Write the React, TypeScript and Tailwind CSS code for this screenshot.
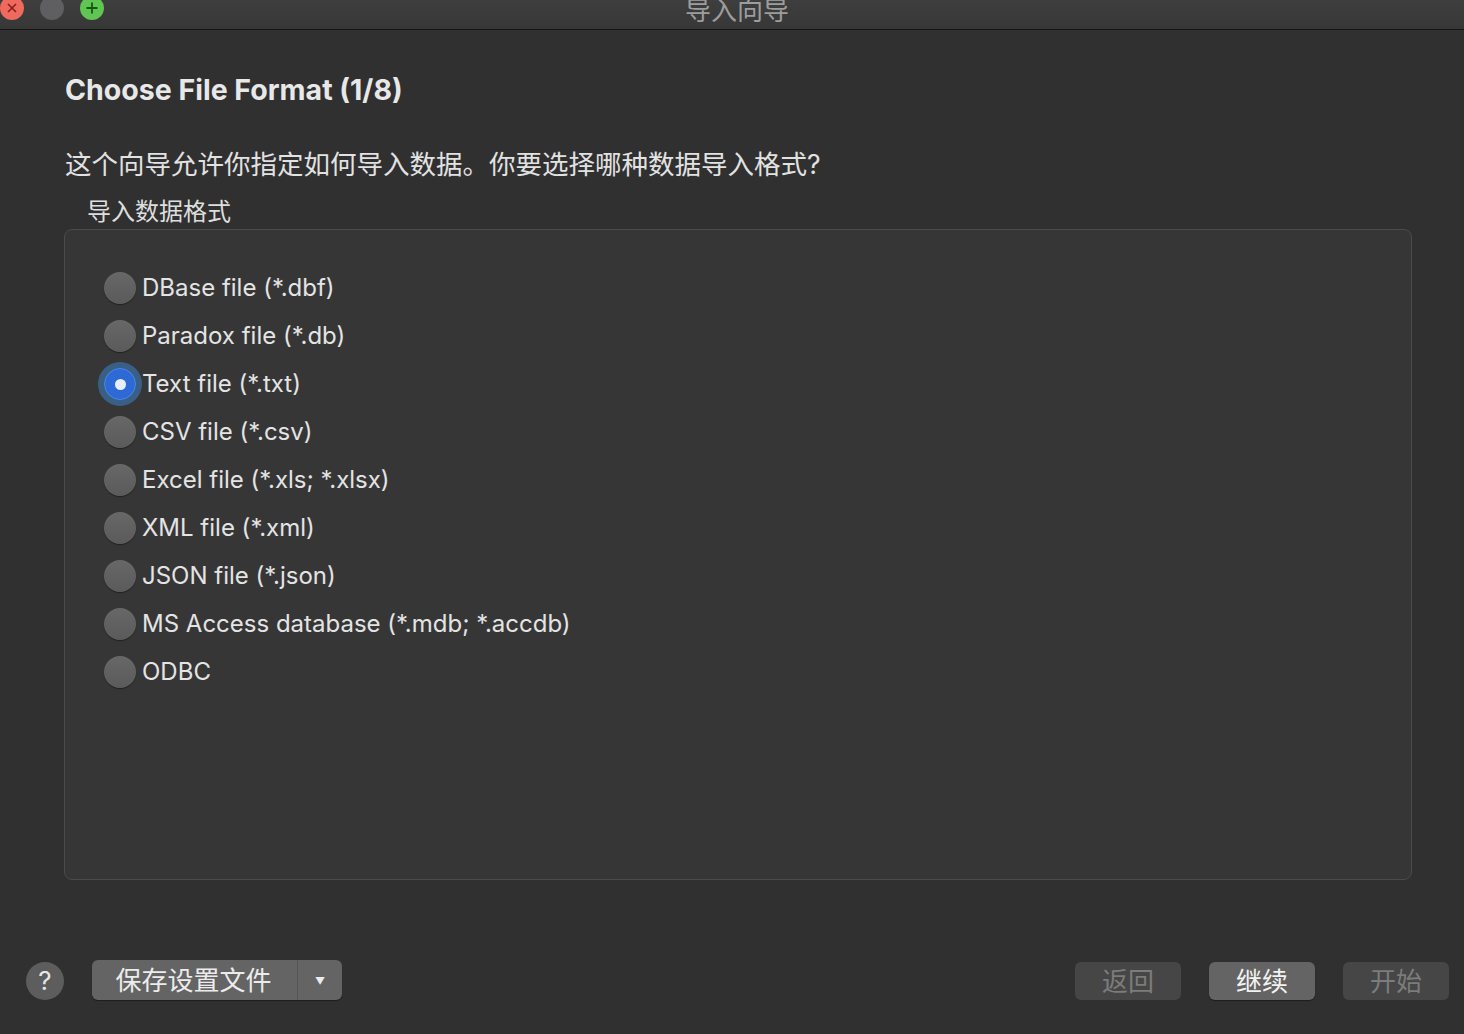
import React, { useState } from 'react'

const formats = [
  'DBase file (*.dbf)',
  'Paradox file (*.db)',
  'Text file (*.txt)',
  'CSV file (*.csv)',
  'Excel file (*.xls; *.xlsx)',
  'XML file (*.xml)',
  'JSON file (*.json)',
  'MS Access database (*.mdb; *.accdb)',
  'ODBC',
]

const font = { fontFamily: 'Inter, "Noto Sans CJK SC", sans-serif' }

const Radio: React.FC<{ checked: boolean }> = ({ checked }) =>
  checked
    ? (
      <span className="relative flex h-[32px] w-[32px] items-center justify-center">
        <span className="absolute -inset-[6px] rounded-full bg-[#3c6a98]/80" />
        <span className="relative flex h-[32px] w-[32px] items-center justify-center rounded-full bg-[#2d6ad6] border border-[#4a86e8]">
          <span className="h-[11px] w-[11px] rounded-full bg-[#e8efff]" />
        </span>
      </span>
    )
    : (
      <span className="h-[32px] w-[32px] rounded-full bg-gradient-to-b from-[#686868] to-[#5a5a5a] shadow-[0_1px_1px_rgba(0,0,0,0.4)]" />
    )

export default function App() {
  const [selected, setSelected] = useState(2)

  return (
    <div className="h-[1034px] w-[1464px] overflow-hidden bg-[#303030] flex flex-col" style={font}>
      {/* title bar */}
      <div className="relative h-[30px] shrink-0 bg-gradient-to-b from-[#3e3e3e] to-[#373737] border-b border-[#141414] overflow-hidden">
        <div className="absolute left-0 -top-[4px] flex items-center">
          <span className="flex h-[24px] w-[24px] items-center justify-center rounded-full bg-[#ee6a5e] text-[#8a1e17]">
            <svg width="12" height="12" viewBox="0 0 12 12"><path d="M2 2 L10 10 M10 2 L2 10" stroke="currentColor" strokeWidth="1.6" /></svg>
          </span>
          <span className="ml-[16px] h-[24px] w-[24px] rounded-full bg-[#5f5f61]" />
          <span className="ml-[16px] flex h-[24px] w-[24px] items-center justify-center rounded-full bg-[#61c554] text-[#0f5a0c]">
            <svg width="14" height="14" viewBox="0 0 14 14"><path d="M7 1.5 V12.5 M1.5 7 H12.5" stroke="currentColor" strokeWidth="1.8" /></svg>
          </span>
        </div>
        <div className="absolute left-0 right-0 -top-[6px] pl-[10px] text-center text-[26px] leading-[34px] text-[#9d9d9d]">导入向导</div>
      </div>

      {/* content */}
      <div className="flex flex-1 flex-col pl-[64px] pr-[52px] pt-[40px]">
        <h1 className="text-[28.5px] font-bold leading-[40px] text-[#e8e8e8] pl-[1px]">Choose File Format (1/8)</h1>
        <p className="mt-[36px] text-[26.5px] leading-[36px] text-[#e2e2e2] pl-[1px]">这个向导允许你指定如何导入数据。你要选择哪种数据导入格式?</p>
        <div className="mt-[14px] pl-[23px] text-[24px] leading-[32px] text-[#dedede]">导入数据格式</div>
        <div className="mt-[1px] h-[651px] rounded-[8px] border border-[#4b4b4b] bg-[#363636] pl-[39px] pt-[34px]">
          <div className="flex flex-col">
            {formats.map((f, i) => (
              <button
                key={f}
                className="flex h-[48px] items-center gap-[6px] text-left"
                onClick={() => setSelected(i)}
              >
                <Radio checked={selected === i} />
                <span className="text-[24px] text-[#e4e4e4] leading-none">{f}</span>
              </button>
            ))}
          </div>
        </div>
      </div>

      {/* bottom bar */}
      <div className="flex h-[122px] shrink-0 items-start justify-between pl-[26px] pr-[15px] pt-[48px]">
        <div className="flex items-center gap-[28px]">
          <button className="flex h-[38px] w-[38px] mt-[1px] items-center justify-center rounded-full bg-[#5d5d5d] text-[26px] text-[#e6e6e6]">?</button>
          <div className="flex h-[40px] w-[250px] rounded-[6px] bg-[#646464] shadow-[0_1px_1px_rgba(0,0,0,0.4)]">
            <button className="flex flex-1 items-center justify-center border-r border-[#555555] text-[26px] text-[#ececec] pr-[2px]">保存设置文件</button>
            <button className="flex w-[44px] items-center justify-center text-[10px] text-[#ececec] pt-[2px]">▼</button>
          </div>
        </div>
        <div className="flex items-center gap-[28px] mt-[2px]">
          <button className="h-[38px] w-[106px] rounded-[6px] bg-[#464646] text-[26px] text-[#7c7c7c]">返回</button>
          <button className="h-[38px] w-[106px] rounded-[6px] bg-[#646464] text-[26px] text-[#f2f2f2] shadow-[0_1px_1px_rgba(0,0,0,0.4)]">继续</button>
          <button className="h-[38px] w-[106px] rounded-[6px] bg-[#464646] text-[26px] text-[#7c7c7c]">开始</button>
        </div>
      </div>
    </div>
  )
}
